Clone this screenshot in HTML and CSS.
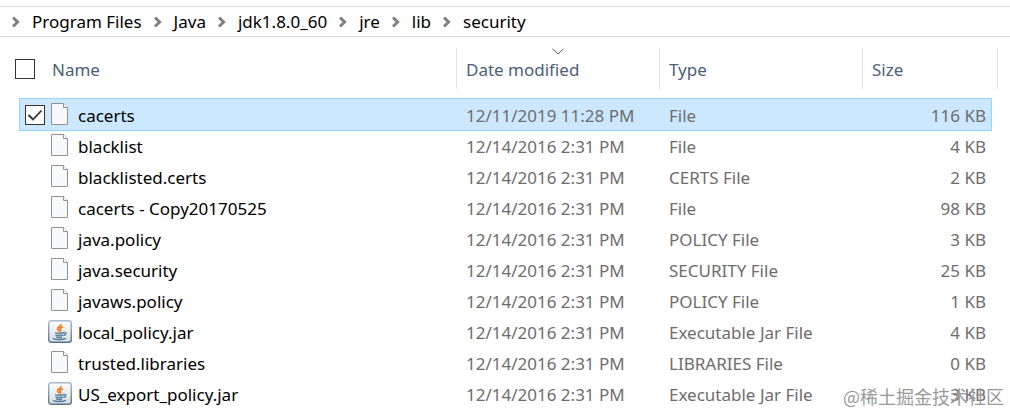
FILE: index.html
```html
<!DOCTYPE html>
<html lang="en">
<head>
  <meta charset="UTF-8" />
  <meta name="viewport" content="width=device-width, initial-scale=1.0"/>
  <title>security</title>
  <link rel="stylesheet" href="styles.css">
</head>
<body>

  <!-- Shared icons -->
  <svg class="sprite" aria-hidden="true">
    <defs>
      <linearGradient id="jar-bg" x1="0" y1="0" x2="0" y2="1">
        <stop offset="0" stop-color="#fdfdfd"/>
        <stop offset="1" stop-color="#d9dcdf"/>
      </linearGradient>
      <linearGradient id="jar-edge" x1="0" y1="0" x2="0" y2="1">
        <stop offset="0" stop-color="#a9bdcd"/>
        <stop offset="1" stop-color="#55738b"/>
      </linearGradient>
    </defs>
    <symbol id="icon-arrow" viewBox="0 0 8 12">
      <path d="M1 1.500 5.600 6 1 10.500" fill="none" stroke="#7f7f7f" stroke-width="3"/>
    </symbol>
    <symbol id="icon-file" viewBox="0 0 24 24">
      <path d="M3.500 0.500H15.500L19.500 4.500V21.500H3.500Z" fill="#f8f9fa" stroke="#929292"/>
      <path d="M15.500 0.500V4.500H19.500" fill="#fff" stroke="#929292"/>
    </symbol>
    <symbol id="icon-jar" viewBox="0 0 24 24">
      <rect x="0.700" y="0.700" width="22.600" height="21.600" rx="2.500" fill="url(#jar-bg)" stroke="url(#jar-edge)" stroke-width="1.400"/>
      <path d="M13 4C14 6 9.200 6.800 9.600 8.900 9.900 10 11 10.200 11.200 11.500M14.800 6.800C11.500 7.600 11.600 8.600 12.500 9.500 13 10.200 12.600 11 12 11.500" fill="none" stroke="#ee7f27" stroke-width="1.800"/>
      <path d="M7 12.600C8.500 13.600 13.500 13.500 15.800 12.500M15.500 12.500C18.800 11.800 18.500 15 15.200 15.600M7.500 14.800C9 15.800 13 15.700 14.700 15M8.200 16.900C10 17.700 12.500 17.600 14 17M5.500 18.200C4 19.600 14.500 20.200 17.800 18.300" fill="none" stroke="#57809f" stroke-width="1.500"/>
    </symbol>
  </svg>

  <nav class="breadcrumb" aria-label="Path">
    <svg class="arrow"><use href="#icon-arrow"/></svg>
    <a href="#">Program Files</a>
    <svg class="arrow"><use href="#icon-arrow"/></svg>
    <a href="#">Java</a>
    <svg class="arrow"><use href="#icon-arrow"/></svg>
    <a href="#">jdk1.8.0_60</a>
    <svg class="arrow"><use href="#icon-arrow"/></svg>
    <a href="#">jre</a>
    <svg class="arrow"><use href="#icon-arrow"/></svg>
    <a href="#">lib</a>
    <svg class="arrow"><use href="#icon-arrow"/></svg>
    <a href="#">security</a>
  </nav>

  <main>
    <table class="files">
      <thead>
        <tr>
          <th class="col-name">
            <div class="name-head">
              <input type="checkbox" id="select-all">
              <label for="select-all">Name</label>
            </div>
          </th>
          <th class="col-date" aria-sort="descending">
            Date modified
            <svg class="sort" viewBox="0 0 12 7"><path d="M0.500 0.800 6 6 11.500 0.800" fill="none" stroke="#555"/></svg>
          </th>
          <th class="col-type">Type</th>
          <th class="col-size">Size</th>
        </tr>
      </thead>
      <tbody>
        <tr class="selected">
          <td><div class="name"><input type="checkbox" id="f1" checked><svg class="icon"><use href="#icon-file"/></svg><label for="f1">cacerts</label></div></td>
          <td>12/11/2019 11:28 PM</td>
          <td>File</td>
          <td class="size">116 KB</td>
        </tr>
        <tr>
          <td><div class="name"><input type="checkbox" id="f2"><svg class="icon"><use href="#icon-file"/></svg><label for="f2">blacklist</label></div></td>
          <td>12/14/2016 2:31 PM</td>
          <td>File</td>
          <td class="size">4 KB</td>
        </tr>
        <tr>
          <td><div class="name"><input type="checkbox" id="f3"><svg class="icon"><use href="#icon-file"/></svg><label for="f3">blacklisted.certs</label></div></td>
          <td>12/14/2016 2:31 PM</td>
          <td>CERTS File</td>
          <td class="size">2 KB</td>
        </tr>
        <tr>
          <td><div class="name"><input type="checkbox" id="f4"><svg class="icon"><use href="#icon-file"/></svg><label for="f4">cacerts - Copy20170525</label></div></td>
          <td>12/14/2016 2:31 PM</td>
          <td>File</td>
          <td class="size">98 KB</td>
        </tr>
        <tr>
          <td><div class="name"><input type="checkbox" id="f5"><svg class="icon"><use href="#icon-file"/></svg><label for="f5">java.policy</label></div></td>
          <td>12/14/2016 2:31 PM</td>
          <td>POLICY File</td>
          <td class="size">3 KB</td>
        </tr>
        <tr>
          <td><div class="name"><input type="checkbox" id="f6"><svg class="icon"><use href="#icon-file"/></svg><label for="f6">java.security</label></div></td>
          <td>12/14/2016 2:31 PM</td>
          <td>SECURITY File</td>
          <td class="size">25 KB</td>
        </tr>
        <tr>
          <td><div class="name"><input type="checkbox" id="f7"><svg class="icon"><use href="#icon-file"/></svg><label for="f7">javaws.policy</label></div></td>
          <td>12/14/2016 2:31 PM</td>
          <td>POLICY File</td>
          <td class="size">1 KB</td>
        </tr>
        <tr>
          <td><div class="name"><input type="checkbox" id="f8"><svg class="icon"><use href="#icon-jar"/></svg><label for="f8">local_policy.jar</label></div></td>
          <td>12/14/2016 2:31 PM</td>
          <td>Executable Jar File</td>
          <td class="size">4 KB</td>
        </tr>
        <tr>
          <td><div class="name"><input type="checkbox" id="f9"><svg class="icon"><use href="#icon-file"/></svg><label for="f9">trusted.libraries</label></div></td>
          <td>12/14/2016 2:31 PM</td>
          <td>LIBRARIES File</td>
          <td class="size">0 KB</td>
        </tr>
        <tr>
          <td><div class="name"><input type="checkbox" id="f10"><svg class="icon"><use href="#icon-jar"/></svg><label for="f10">US_export_policy.jar</label></div></td>
          <td>12/14/2016 2:31 PM</td>
          <td>Executable Jar File</td>
          <td class="size">3 KB</td>
        </tr>
      </tbody>
    </table>
    <span class="watermark" lang="zh">@稀土掘金技术社区</span>
  </main>

</body>
</html>
```
FILE: styles.css
```css
* {
  box-sizing: border-box;
}

body {
  margin: 0;
  padding-top: 6px;
  background: #fff;
  color: #000;
  font-family: "Noto Sans", "Open Sans", sans-serif;
  font-size: 17px;
  line-height: 24px;
}

.sprite {
  position: absolute;
  width: 0;
  height: 0;
}

/* Address bar */
.breadcrumb {
  display: flex;
  align-items: center;
  gap: 12px;
  height: 31px;
  padding-left: 12px;
  border-top: 1px solid #d9d9d9;
  border-bottom: 1px solid #d9d9d9;
}

.breadcrumb a {
  color: #000;
  text-decoration: none;
}

.arrow {
  width: 8px;
  height: 12px;
}

main {
  position: relative;
  padding: 11px 19px 4px 20px;
}

/* File list */
.files {
  width: 100%;
  table-layout: fixed;
  border-collapse: separate;
  border-spacing: 0;
}

.files th {
  position: relative;
  height: 41px;
  padding: 2px 9px 0;
  border-left: 1px solid #e2e2e2;
  color: #4c607a;
  font-weight: 400;
  text-align: left;
}

.files .col-name {
  padding: 0;
  border-left: none;
}

.col-date,
.col-type {
  width: 203px;
}

.col-size {
  width: 129px;
}

/* Edge of the last column sits past the rows */
.col-size::after {
  content: "";
  position: absolute;
  top: 0;
  right: -7px;
  width: 1px;
  height: 100%;
  background: #e2e2e2;
}

.name-head {
  display: flex;
  align-items: center;
  gap: 17px;
  margin-left: -5px;
}

.name-head label {
  padding-top: 2px;
}

.sort {
  position: absolute;
  top: 0;
  left: 50%;
  width: 12px;
  height: 7px;
  margin-left: -6px;
}

.files tbody::before {
  content: "";
  display: block;
  height: 10px;
}

.files td {
  height: 31px;
  padding: 2px 5px 0 10px;
  color: #6d6d6d;
}

.files td:first-child {
  padding: 0 0 0 5px;
}

.name {
  display: flex;
  align-items: center;
}

.name label {
  padding-top: 2px;
  color: #000;
}

.icon {
  width: 24px;
  height: 24px;
  margin: 0 6px 0 3px;
}

.size {
  text-align: right;
}

.selected {
  background: #cce8ff;
  outline: 1px solid #99d1ff;
}

input[type="checkbox"] {
  appearance: none;
  flex: none;
  width: 20px;
  height: 20px;
  margin: 0;
  border: 1px solid #333;
  background: #fff;
}

.name input {
  opacity: 0;
}

.name input:checked,
.name input:focus,
tr:hover .name input {
  opacity: 1;
}

input[type="checkbox"]:checked {
  background: #fff url("data:image/svg+xml,%3Csvg xmlns='http://www.w3.org/2000/svg' viewBox='0 0 18 18'%3E%3Cpath d='M2.500 9l4.500 4.500 8.500-9' fill='none' stroke='%23333' stroke-width='1.800'/%3E%3C/svg%3E") center / 18px no-repeat;
}

.watermark {
  position: absolute;
  right: 6px;
  bottom: 5px;
  color: #999;
  font-family: "Noto Sans CJK SC", sans-serif;
  font-size: 18px;
  pointer-events: none;
}
```
